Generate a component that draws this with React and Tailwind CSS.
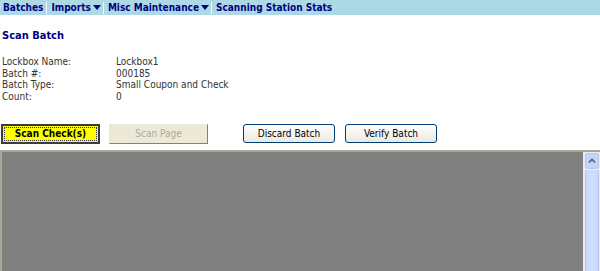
export default function App() {
  const rows = [
    ['Lockbox Name:', 'Lockbox1'],
    ['Batch #:', '000185'],
    ['Batch Type:', 'Small Coupon and Check'],
    ['Count:', '0'],
  ];

  const Arrow = () => (
    <svg width="8" height="5" viewBox="0 0 8 5" className="ml-[2px]">
      <path d="M0 0 H8 L4 5 Z" fill="#000080" />
    </svg>
  );

  return (
    <div className="w-[600px] h-[271px] bg-white overflow-hidden flex flex-col" style={{ fontFamily: '"DejaVu Sans Condensed", "DejaVu Sans", Verdana, sans-serif' }}>
      {/* nav bar */}
      <div className="h-[15px] bg-[#add8e6] flex items-center pl-[3px] text-[10px] font-bold text-[#000080] leading-none">
        <span>Batches</span>
        <span className="ml-[3px] mr-[4px] w-px h-[12px] bg-[#f4fafc]"></span>
        <span>Imports</span>
        <Arrow />
        <span className="ml-[2px] mr-[4px] w-px h-[12px] bg-[#f4fafc]"></span>
        <span>Misc Maintenance</span>
        <Arrow />
        <span className="ml-[2px] mr-[4px] w-px h-[12px] bg-[#f4fafc]"></span>
        <span>Scanning Station Stats</span>
      </div>

      <div className="pl-[2px] pt-[14px] text-[11px] font-bold text-[#000080] leading-[14px]">Scan Batch</div>

      <div className="pl-[2px] pt-[13px] text-[10px] text-[#333] leading-[11.7px]">
        {rows.map(([k, v]) => (
          <div key={k} className="flex">
            <span className="w-[114px]">{k}</span>
            <span>{v}</span>
          </div>
        ))}
      </div>

      <div className="flex items-center pl-[1px] pt-[21px] text-[10px] leading-none">
        <button className="w-[99px] h-[20px] bg-[#ffff00] border-2 border-[#3c3c3c] outline-1 outline-dotted outline-[#333] outline-offset-[-4px] font-bold text-black">
          Scan Check(s)
        </button>
        <button className="ml-[9px] w-[99px] h-[20px] bg-[#ece9d8] border border-[#ece9d8] border-r-[#808080] border-b-[#808080] text-[#aca899]">
          Scan Page
        </button>
        <button className="ml-[35px] w-[92px] h-[19px] bg-gradient-to-b from-white to-[#ece9e2] border border-[#003c74] rounded-[3px] text-black">
          Discard Batch
        </button>
        <button className="ml-[10px] w-[92px] h-[19px] bg-gradient-to-b from-white to-[#ece9e2] border border-[#003c74] rounded-[3px] text-black">
          Verify Batch
        </button>
      </div>

      {/* viewer area */}
      <div className="mt-[6px] flex-1 flex bg-[#808080] border-t-2 border-l-2 border-t-[#aca899] border-l-[#aca899]">
        <div className="flex-1"></div>
        <div className="w-[17px] flex flex-col bg-[#ebeaf5] border-l border-[#eeede5]">
          <div className="h-[16px] m-px rounded-[2px] bg-[#c1d3fb] border border-[#b5c9ef] flex items-center justify-center">
            <svg width="8" height="6" viewBox="0 0 8 6">
              <path d="M1 4.5 L4 1.5 L7 4.5" fill="none" stroke="#4d6185" strokeWidth="1.6" />
            </svg>
          </div>
          <div className="flex-1 mx-px bg-gradient-to-r from-[#c8d7fb] via-[#d2defc] to-[#c8d7fb] border-x border-[#b5c9ef]"></div>
        </div>
      </div>
    </div>
  );
}
